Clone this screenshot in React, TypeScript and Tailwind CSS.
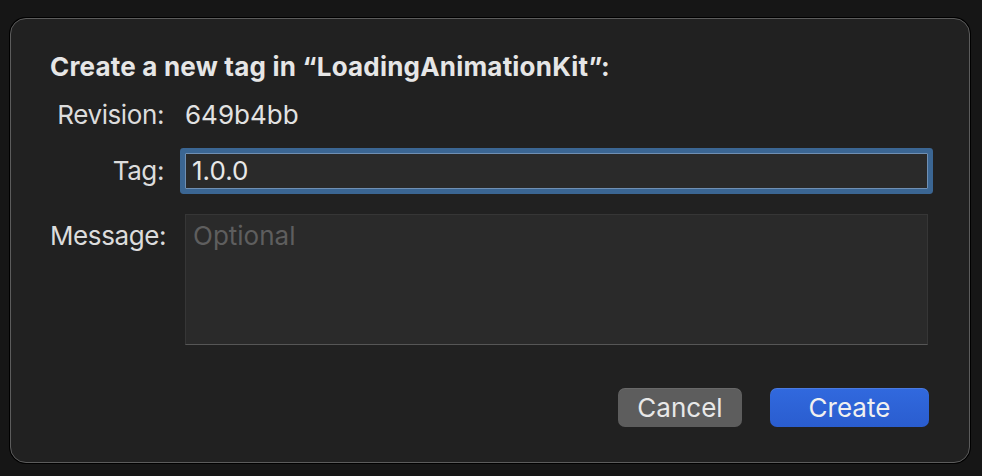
import React from 'react';

const font = { fontFamily: 'Inter, "Liberation Sans", sans-serif' };

const Row = ({ label, children, top }: { label: string; children: React.ReactNode; top?: boolean }) => (
  <div className={`flex gap-[21px] ${top ? 'items-start' : 'items-center'}`}>
    <div
      className={`w-[114px] shrink-0 whitespace-nowrap text-right tracking-[-0.4px] text-[#dcdcdc] ${top ? 'pt-[6px]' : ''}`}
    >
      {label}
    </div>
    <div className="min-w-0 flex-1">{children}</div>
  </div>
);

// Macの「新しいタグを作成」ダイアログ
const App = () => {
  return (
    <div className="h-[476px] w-[982px] bg-[#161616] pb-[13px] pl-[10px] pr-[12px] pt-[18px]" style={font}>
      <div className="flex h-full flex-col rounded-[16px] border border-[#5c5c5c] bg-[#212121] pl-[39px] pr-[41px] pt-[32px] text-[26px] leading-[32px] shadow-[0_0_0_1px_#000]">
        <h1 className="whitespace-nowrap font-bold tracking-[0.2px] text-[#e6e6e6]">
          Create a new tag in “LoadingAnimationKit”:
        </h1>

        <div className="mt-[16px] flex flex-col">
          <Row label="Revision:">
            <span className="text-[#e2e2e2]">649b4bb</span>
          </Row>

          <div className="mt-[22px]">
            <Row label="Tag:">
              <div className="flex h-[36px] items-center rounded-[1px] border border-[#6f8fb3] bg-[#2a2a2a] pl-[6px] text-[#e8e8e8] shadow-[0_0_0_5px_#3b6693]">
                1.0.0
              </div>
            </Row>
          </div>

          <div className="mt-[25px]">
            <Row label="Message:" top>
              <div className="h-[131px] border border-[#363636] border-b-[#565656] bg-[#2a2a2a] pl-[7px] pt-[5px] text-[#5e5e5e]">
                Optional
              </div>
            </Row>
          </div>
        </div>

        <div className="mr-[-1px] mt-[43px] flex justify-end gap-[28px]">
          <button className="flex h-[39px] w-[124px] items-center justify-center rounded-[7px] bg-[#5d5d5d] text-[#e8e8e8] shadow-[inset_0_1px_0_rgba(255,255,255,0.08)]">
            Cancel
          </button>
          <button className="flex h-[39px] w-[159px] items-center justify-center rounded-[7px] bg-gradient-to-b from-[#3169de] to-[#2a5dcf] text-[#f0f0f0] shadow-[inset_0_1px_0_rgba(255,255,255,0.12)]">
            Create
          </button>
        </div>
      </div>
    </div>
  );
};

export default App;
